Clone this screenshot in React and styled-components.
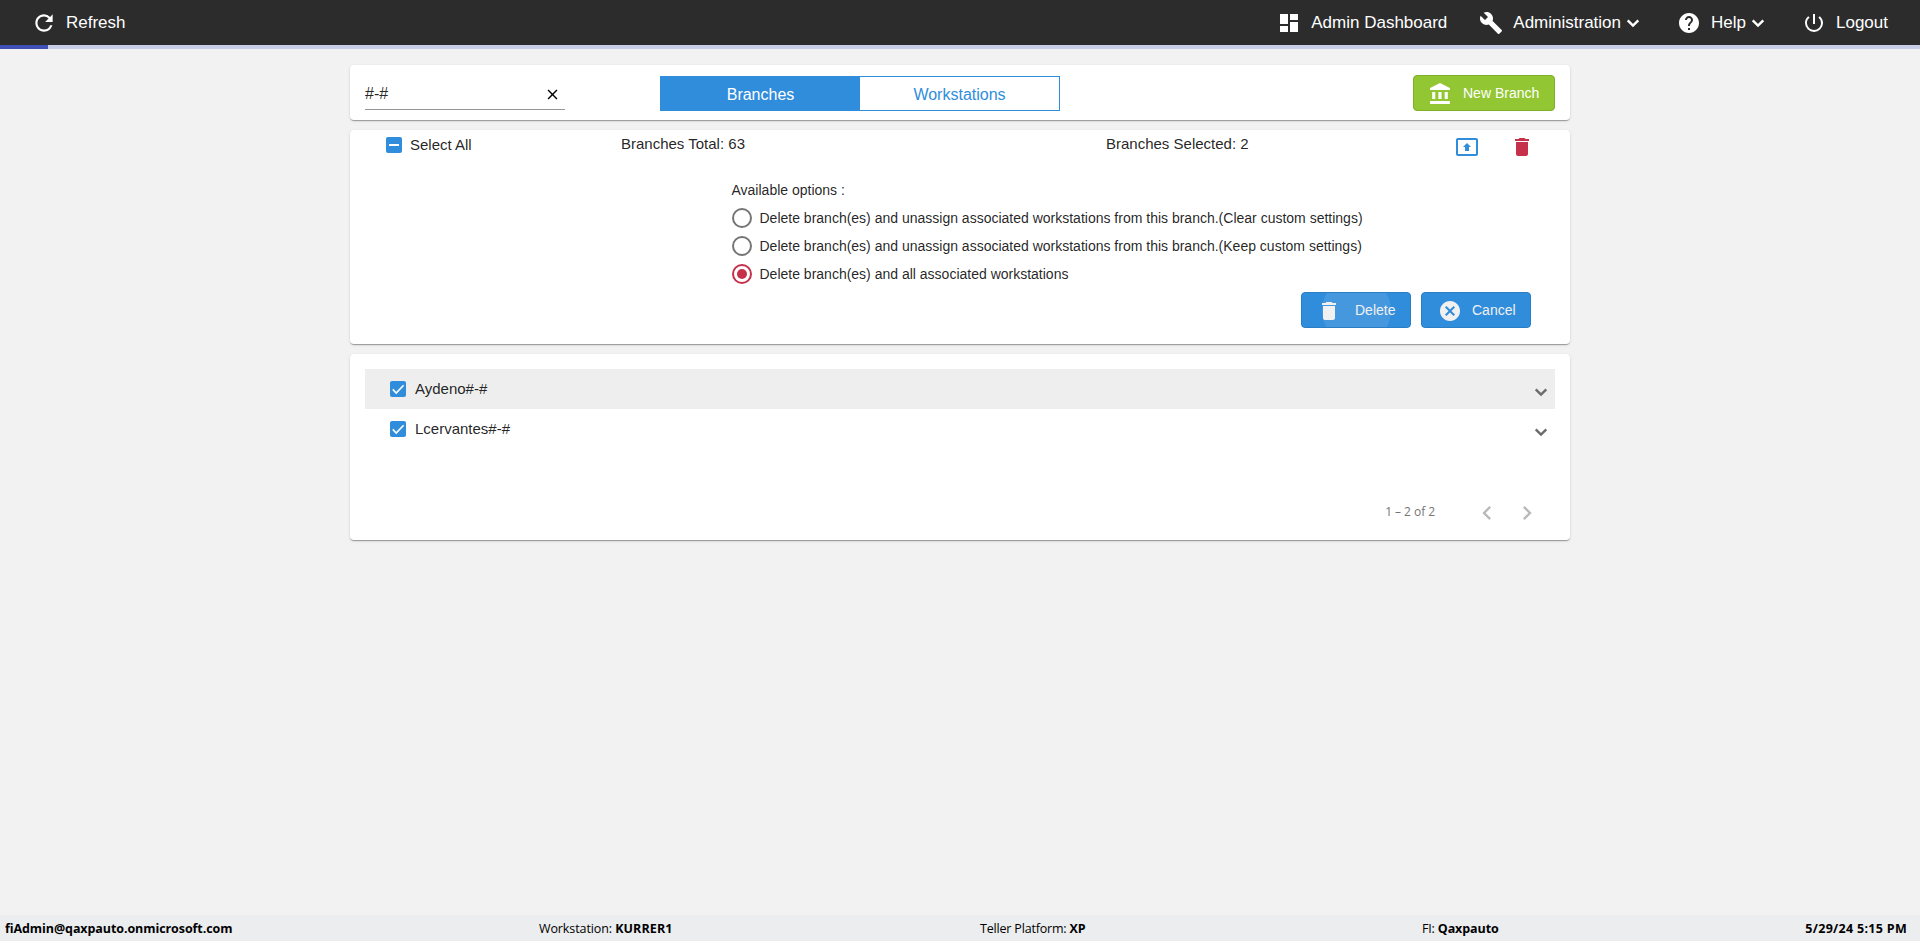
import React from "react";
import styled, { createGlobalStyle } from "styled-components";
import {
  MdRefresh,
  MdDashboard,
  MdBuild,
  MdHelp,
  MdPowerSettingsNew,
  MdClose,
  MdPresentToAll,
  MdDelete,
  MdCancel,
  MdChevronLeft,
  MdChevronRight,
} from "react-icons/md";

const GlobalStyle = createGlobalStyle`
  * { box-sizing: border-box; }
  body {
    margin: 0;
    background: #f2f2f2;
    font-family: Arial, "Liberation Sans", sans-serif;
    color: rgba(0, 0, 0, 0.87);
  }
  button, input { font-family: inherit; }
  svg { display: block; flex: none; }
`;

const Page = styled.div`
  display: flex;
  flex-direction: column;
  height: 941px;
`;

const Toolbar = styled.header`
  display: flex;
  justify-content: space-between;
  height: 45px;
  padding: 0 32px 0 31px;
  background: #2c2c2c;
  color: #fff;
`;

const Nav = styled.nav`
  display: flex;
`;

const NavItem = styled.a`
  display: flex;
  align-items: center;
  height: 45px;
  margin-left: ${(p) => p.$before || 0}px;
  font-size: 17px;
  line-height: 20px;
`;

const NavLabel = styled.span`
  margin-left: ${(p) => p.$gap || 10}px;
  padding-top: 1px;
`;

const Progress = styled.div`
  height: 4px;
  background: #c9cee8;
`;

const ProgressFill = styled.div`
  width: 48px;
  height: 4px;
  background: #3f51b5;
`;

const Content = styled.main`
  flex: 1;
  display: flex;
  flex-direction: column;
  gap: 10px;
  width: 1220px;
  margin: 16px auto 0;
`;

const Card = styled.section`
  height: ${(p) => p.$height}px;
  background: #fff;
  border-radius: 4px;
  box-shadow: 0 2px 1px -1px rgba(0, 0, 0, 0.2), 0 1px 1px 0 rgba(0, 0, 0, 0.14),
    0 1px 3px 0 rgba(0, 0, 0, 0.12);
`;

const FilterCard = styled(Card)`
  display: flex;
  align-items: flex-start;
  padding: 10px 15px 0;
`;

const Search = styled.div`
  display: flex;
  align-items: center;
  width: 200px;
  height: 35px;
  padding: 5px 4px 0 0;
  border-bottom: 1px solid #949494;
`;

const SearchInput = styled.input`
  flex: 1;
  min-width: 0;
  padding: 0 0 2px;
  border: 0;
  outline: 0;
  background: none;
  font-size: 16px;
  color: rgba(0, 0, 0, 0.87);
`;

const Tabs = styled.div`
  display: flex;
  width: 400px;
  height: 35px;
  margin: 1px 0 0 95px;
  border: 1px solid #308ddb;
`;

const Tab = styled.button`
  flex: 1;
  padding: 2px 0 0;
  border: 0;
  font-size: 16px;
  background: ${(p) => (p.$active ? "#308ddb" : "#fff")};
  color: ${(p) => (p.$active ? "#fff" : "#308ddb")};
`;

const Button = styled.button`
  display: flex;
  align-items: center;
  position: relative;
  overflow: hidden;
  width: ${(p) => p.$width}px;
  height: 36px;
  padding: 0 0 0 ${(p) => p.$pad}px;
  border: 1px solid ${(p) => (p.$green ? "#7fb02a" : "#2a7ec5")};
  border-radius: 4px;
  background: ${(p) => (p.$green ? "#92c632" : "#308ddb")};
  color: ${(p) => (p.$green ? "#fff" : "#f0f0f0")};
  font-size: 14px;
  line-height: 34px;

  & > svg {
    margin-top: 1px;
  }
`;

const ButtonLabel = styled.span`
  margin-left: ${(p) => p.$gap}px;
`;

const Ripple = styled.span`
  position: absolute;
  left: 20px;
  top: -17px;
  width: 69px;
  height: 69px;
  border-radius: 50%;
  background: rgba(255, 255, 255, 0.1);
`;

const NewBranch = styled.div`
  margin-left: auto;
`;

const Summary = styled.div`
  display: flex;
  align-items: flex-start;
  height: 45px;
  padding: 5px 36px 0 36px;
  font-size: 15px;
  line-height: 17px;
`;

const SelectAll = styled.label`
  display: flex;
  gap: 8px;
  width: 235px;
  padding-top: 1px;
`;

const Total = styled.div`
  width: 485px;
`;

const SummaryActions = styled.div`
  display: flex;
  gap: 31px;
  margin-left: auto;
`;

const CheckBox = styled.span`
  display: flex;
  align-items: center;
  justify-content: center;
  flex: none;
  width: 16px;
  height: 16px;
  margin-top: ${(p) => p.$top || 0}px;
  border-radius: 2px;
  background: #308ddb;
`;

const Options = styled.div`
  padding: 5px 0 0 382px;
  font-size: 14px;
  line-height: 20px;
`;

const OptionsTitle = styled.div`
  height: 24px;
  margin-left: -0.5px;
`;

const Option = styled.label`
  display: flex;
  align-items: center;
  gap: 7.5px;
  height: 28px;
`;

const Radio = styled.span`
  display: flex;
  align-items: center;
  justify-content: center;
  width: 20px;
  height: 20px;
  border: 2px solid ${(p) => (p.$checked ? "#c5314a" : "#757575")};
  border-radius: 50%;

  &::after {
    content: "";
    width: 10px;
    height: 10px;
    border-radius: 50%;
    background: ${(p) => (p.$checked ? "#c5314a" : "transparent")};
  }
`;

const FormActions = styled.div`
  display: flex;
  justify-content: flex-end;
  gap: 10px;
  padding: 4px 39px 0 0;
`;

const ListCard = styled(Card)`
  padding: 15px 15px 0;
`;

const BranchRow = styled.div`
  display: flex;
  align-items: center;
  height: 40px;
  padding: 0 2px 0 25px;
  background: ${(p) => (p.$shaded ? "#eee" : "#fff")};
  font-size: 15px;

  & > svg {
    margin: 5px 0 0 auto;
    color: #6c6c6c;
  }
`;

const BranchName = styled.span`
  margin-left: 9px;
  padding-bottom: 2px;
`;

const Pager = styled.div`
  display: flex;
  align-items: center;
  justify-content: flex-end;
  gap: 12px;
  height: 28px;
  margin-top: 50px;
  padding-right: 14px;
  color: #b9b9b9;
`;

const Range = styled.span`
  margin-right: 26px;
  font-family: "Open Sans", sans-serif;
  font-size: 12px;
  letter-spacing: -0.05px;
  color: #757575;
  line-height: 24px;
  padding-bottom: 2px;
`;

const StatusBar = styled.footer`
  display: grid;
  grid-template-columns: 534px 441px 442px 1fr auto;
  align-items: center;
  height: 26px;
  padding: 0 13px 0 5px;
  background: #ecedef;
  color: #000;
  font-family: "Open Sans", sans-serif;
  font-size: 12.5px;
  letter-spacing: -0.18px;
  white-space: nowrap;

  b {
    letter-spacing: -0.08px;
  }
`;

const Workstation = styled.span`
  letter-spacing: -0.1px;

  && b {
    letter-spacing: 0.1px;
  }
`;

const Clock = styled.b`
  && {
    letter-spacing: 0.3px;
  }
`;

const Check = () => (
  <svg width="16" height="16" viewBox="0 0 16 16">
    <path d="M2.8 8.4 6.2 12 13.6 4.2" fill="none" stroke="#fff" strokeWidth="1.6" />
  </svg>
);

const Dash = () => (
  <svg width="16" height="16" viewBox="0 0 16 16">
    <path d="M3 8h10" stroke="#fff" strokeWidth="2" />
  </svg>
);

const BankIcon = () => (
  <svg width="25" height="24" viewBox="0 0 24 24" preserveAspectRatio="none" fill="currentColor">
    <path d="M4 10v7h3v-7H4zm6 0v7h3v-7h-3zM2 22h19v-3H2v3zm14-12v7h3v-7h-3zm-4.5-9L2 6v2h19V6l-9.5-5z" />
  </svg>
);

const ChevronDown = () => (
  <svg width="24" height="24" viewBox="0 0 24 24">
    <path d="M6.7 9.3 12 14.6l5.3-5.3" fill="none" stroke="currentColor" strokeWidth="2.4" />
  </svg>
);

const OPTIONS = [
  "Delete branch(es) and unassign associated workstations from this branch.(Clear custom settings)",
  "Delete branch(es) and unassign associated workstations from this branch.(Keep custom settings)",
  "Delete branch(es) and all associated workstations",
];

const BRANCHES = ["Aydeno#-#", "Lcervantes#-#"];

export default function App() {
  return (
    <Page>
      <GlobalStyle />
      <Toolbar>
        <NavItem>
          <MdRefresh size={26} />
          <NavLabel $gap={9}>Refresh</NavLabel>
        </NavItem>
        <Nav>
          <NavItem>
            <MdDashboard size={24} />
            <NavLabel>Admin Dashboard</NavLabel>
          </NavItem>
          <NavItem $before={32}>
            <MdBuild size={24} />
            <NavLabel>Administration</NavLabel>
            <ChevronDown />
          </NavItem>
          <NavItem $before={32}>
            <MdHelp size={24} />
            <NavLabel>Help</NavLabel>
            <ChevronDown />
          </NavItem>
          <NavItem $before={32}>
            <MdPowerSettingsNew size={24} />
            <NavLabel>Logout</NavLabel>
          </NavItem>
        </Nav>
      </Toolbar>
      <Progress>
        <ProgressFill />
      </Progress>
      <Content>
        <FilterCard $height={55}>
          <Search>
            <SearchInput defaultValue="#-#" />
            <MdClose size={17} color="#000" />
          </Search>
          <Tabs>
            <Tab $active>Branches</Tab>
            <Tab>Workstations</Tab>
          </Tabs>
          <NewBranch>
            <Button $green $width={142} $pad={14}>
              <BankIcon />
              <ButtonLabel $gap={10}>New Branch</ButtonLabel>
            </Button>
          </NewBranch>
        </FilterCard>
        <Card $height={214}>
          <Summary>
            <SelectAll>
              <CheckBox $top={1}>
                <Dash />
              </CheckBox>
              Select All
            </SelectAll>
            <Total>Branches Total: 63</Total>
            <div>Branches Selected: 2</div>
            <SummaryActions>
              <MdPresentToAll size={24} color="#308ddb" />
              <MdDelete size={24} color="#c5314a" />
            </SummaryActions>
          </Summary>
          <Options>
            <OptionsTitle>Available options :</OptionsTitle>
            {OPTIONS.map((text, i) => (
              <Option key={text}>
                <Radio $checked={i === 2} />
                {text}
              </Option>
            ))}
          </Options>
          <FormActions>
            <Button $width={110} $pad={15}>
              <Ripple />
              <MdDelete size={24} />
              <ButtonLabel $gap={14}>Delete</ButtonLabel>
            </Button>
            <Button $width={110} $pad={16}>
              <MdCancel size={24} />
              <ButtonLabel $gap={10}>Cancel</ButtonLabel>
            </Button>
          </FormActions>
        </Card>
        <ListCard $height={186}>
          {BRANCHES.map((name, i) => (
            <BranchRow key={name} $shaded={i === 0}>
              <CheckBox>
                <Check />
              </CheckBox>
              <BranchName>{name}</BranchName>
              <ChevronDown />
            </BranchRow>
          ))}
          <Pager>
            <Range>1 – 2 of 2</Range>
            <MdChevronLeft size={28} />
            <MdChevronRight size={28} />
          </Pager>
        </ListCard>
      </Content>
      <StatusBar>
        <b>fiAdmin@qaxpauto.onmicrosoft.com</b>
        <Workstation>
          Workstation: <b>KURRER1</b>
        </Workstation>
        <span>
          Teller Platform: <b>XP</b>
        </span>
        <span>
          FI: <b>Qaxpauto</b>
        </span>
        <Clock>5/29/24 5:15 PM</Clock>
      </StatusBar>
    </Page>
  );
}
